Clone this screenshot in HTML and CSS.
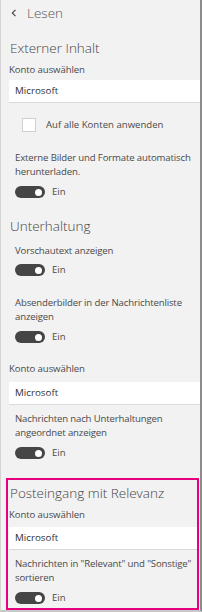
FILE: index.html
```html
<!DOCTYPE html>
<html lang="de">
<head>
<meta charset="utf-8">
<link rel="stylesheet" href="styles.css">
</head>
<body>
<div class="frame">
  <div class="header">
    <svg class="chev" width="6" height="8" viewBox="0 0 6 8"><path d="M4.5 0.8 L1.3 4 L4.5 7.2" fill="none" stroke="#444" stroke-width="1.1"/></svg>
    <span class="header-title">Lesen</span>
  </div>

  <div class="title t1">Externer Inhalt</div>
  <div class="label l1">Konto auswählen</div>
  <div class="input i1">Microsoft</div>
  <div class="check-row">
    <span class="checkbox"></span>
    <span class="check-label">Auf alle Konten anwenden</span>
  </div>
  <div class="para p1">Externe Bilder und Formate automatisch herunterladen.</div>
  <div class="toggle-row tg1"><span class="toggle"><span class="knob"></span></span><span class="toggle-label">Ein</span></div>

  <div class="title t2">Unterhaltung</div>
  <div class="para p2">Vorschautext anzeigen</div>
  <div class="toggle-row tg2"><span class="toggle"><span class="knob"></span></span><span class="toggle-label">Ein</span></div>
  <div class="para p3">Absenderbilder in der Nachrichtenliste anzeigen</div>
  <div class="toggle-row tg3"><span class="toggle"><span class="knob"></span></span><span class="toggle-label">Ein</span></div>
  <div class="label l2">Konto auswählen</div>
  <div class="input i2">Microsoft</div>
  <div class="para p4">Nachrichten nach Unterhaltungen angeordnet anzeigen</div>
  <div class="toggle-row tg4"><span class="toggle"><span class="knob"></span></span><span class="toggle-label">Ein</span></div>

  <div class="focus-box">
    <div class="title t3">Posteingang mit Relevanz</div>
    <div class="label l3">Konto auswählen</div>
    <div class="input i3">Microsoft</div>
    <div class="para p5">Nachrichten in "Relevant" und "Sonstige" sortieren</div>
    <div class="toggle-row tg5"><span class="toggle"><span class="knob"></span></span><span class="toggle-label">Ein</span></div>
  </div>
</div>
</body>
</html>
```

FILE: styles.css
```css
html, body {
  margin: 0;
  padding: 0;
  background: #f2f2f2;
}
body {
  width: 202px;
  height: 612px;
  overflow: hidden;
  font-family: "Open Sans", "Noto Sans", sans-serif;
  color: #4a4a4a;
}
.frame {
  box-sizing: border-box;
  width: 202px;
  height: 612px;
  border-left: 1px solid #d4d4d4;
  border-right: 2px solid #8c8c8c;
  border-bottom: 2px solid #c8c8c8;
  background: #f2f2f2;
  display: flex;
  flex-direction: column;
}
.header {
  height: 26px;
  display: flex;
  align-items: center;
  padding-left: 10px;
  gap: 10px;
}
.header-title {
  font-size: 13.5px;
  font-weight: 300;
  line-height: 20px;
  color: #555;
}
.title {
  font-size: 13.5px;
  font-weight: 300;
  line-height: 20px;
  padding-left: 9px;
  color: #444;
}
.label {
  font-size: 9.6px;
  line-height: 14px;
  padding-left: 8px;
  letter-spacing: -0.1px;
}
.input {
  margin-left: 8px;
  height: 22px;
  background: #fff;
  border-bottom: 1px solid #dadada;
  font-size: 9.8px;
  line-height: 22px;
  padding-left: 6px;
  color: #333;
}
.check-row {
  display: flex;
  align-items: center;
  height: 14px;
  margin-top: 15px;
  padding-left: 21px;
  gap: 10px;
}
.checkbox {
  box-sizing: border-box;
  width: 14px;
  height: 14px;
  background: #fff;
  border: 1px solid #d0d0d0;
}
.check-label {
  font-size: 9.6px;
  line-height: 14px;
}
.para {
  font-size: 9.6px;
  line-height: 14px;
  padding-left: 14px;
  letter-spacing: -0.15px;
}
.toggle-row {
  display: flex;
  align-items: center;
  height: 12px;
  padding-left: 14px;
  gap: 7px;
}
.toggle {
  box-sizing: border-box;
  width: 30px;
  height: 12px;
  border-radius: 6px;
  background: #454545;
  display: flex;
  align-items: center;
  justify-content: flex-end;
  padding-right: 3px;
}
.knob {
  width: 7px;
  height: 7px;
  border-radius: 50%;
  background: #fff;
}
.toggle-label {
  font-size: 9.6px;
  line-height: 12px;
}

.t1 { margin-top: 12px; }
.l1 { margin-top: 5px; }
.i1 { margin-top: 3px; }
.p1 { margin-top: 19px; }
.tg1 { margin-top: 7px; }
.t2 { margin-top: 18px; }
.p2 { margin-top: 8px; }
.tg2 { margin-top: 6px; }
.p3 { margin-top: 20px; }
.tg3 { margin-top: 7px; }
.l2 { margin-top: 19px; }
.i2 { margin-top: 6px; }
.p4 { margin-top: 7px; }
.tg4 { margin-top: 7px; }

.focus-box {
  margin-top: 19px;
  margin-left: 5px;
  margin-right: 1px;
  border: 2px solid #e6007e;
  padding: 3px 0 4px 0;
  display: flex;
  flex-direction: column;
}
.focus-box .title { padding-left: 2px; }
.focus-box .label { padding-left: 1px; }
.focus-box .input { margin-left: 1px; }
.focus-box .para { padding-left: 7px; }
.focus-box .toggle-row { padding-left: 7px; }
.l3 { margin-top: 5px; }
.i3 { margin-top: 5px; }
.p5 { margin-top: 7px; }
.tg5 { margin-top: 7px; }
```
